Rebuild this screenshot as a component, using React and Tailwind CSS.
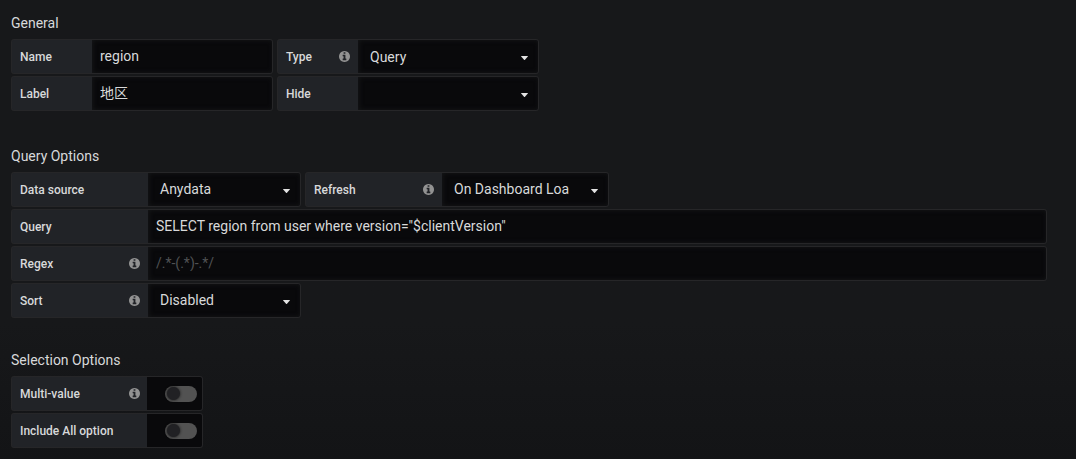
function InfoIcon({ className }) {
  return (
    <svg className={`size-[11px] text-[#929292] ${className}`} viewBox="0 128 1536 1536" fill="currentColor">
      <path d="M1024 1376v-160q0-14-9-23t-23-9h-96v-512q0-14-9-23t-23-9h-320q-14 0-23 9t-9 23v160q0 14 9 23t23 9h96v320h-96q-14 0-23 9t-9 23v160q0 14 9 23t23 9h448q14 0 23-9t9-23zm-128-896v-160q0-14-9-23t-23-9h-192q-14 0-23 9t-9 23v160q0 14 9 23t23 9h192q14 0 23-9t9-23zm640 416q0 209-103 385.500t-279.500 279.500-385.500 103-385.500-103-279.500-279.500-103-385.500 103-385.500 279.500-279.500 385.500-103 385.500 103 279.500 279.500 103 385.500z" />
    </svg>
  );
}

function Label({ children, info, width, iconClass = "mr-[0.5px]" }) {
  return (
    <div className={`flex h-[35px] shrink-0 items-center justify-between rounded-l-[3px] border border-r-0 border-[#262628] bg-[#212327] px-2 text-xs font-medium ${width}`}>
      <span>{children}</span>
      {info && <InfoIcon className={iconClass} />}
    </div>
  );
}

const field =
  "h-[35px] rounded-r-[3px] border border-l-0 border-[#262628] bg-[#09090b] shadow-[inset_1px_0_5px_0_#161719]";

function Input({ value, placeholder, width, pad = "pb-px" }) {
  return (
    <input
      className={`${field} px-2 ${pad} text-sm text-[#d8d9da] outline-none placeholder:text-[#505254] ${width}`}
      defaultValue={value}
      placeholder={placeholder}
      spellCheck={false}
    />
  );
}

function Select({ value, width, pad = "pb-px" }) {
  return (
    <div className={`${field} flex items-center justify-between pr-[10px] pl-3 text-sm ${width}`}>
      <span className={pad}>{value}</span>
      <svg className="mt-[3px] h-1 w-[7px]" viewBox="0 0 7 4" fill="#e3e3e3">
        <path d="M.6 0h5.800q.6 0 .4.600L4 3.700q-.5.400-1 0L.2.600Q0 0 .6 0z" />
      </svg>
    </div>
  );
}

function Toggle() {
  return (
    <div className="flex h-[35px] w-14 items-center justify-end rounded-r-[3px] border border-l-0 border-[#262628] bg-[#09090b] pr-[5px]">
      <button className="flex h-4 w-8 items-center rounded-full bg-[#525252] pl-[1.5px]">
        <span className="size-[13px] rounded-full bg-[#212124] shadow-[0_0_3px_#111]" />
      </button>
    </div>
  );
}

function Row({ children }) {
  return <div className="flex h-[35px] gap-1">{children}</div>;
}

function Section({ title, children }) {
  return (
    <section>
      <h5 className="mb-[6px] h-5 text-sm leading-5">{title}</h5>
      <div className="flex flex-col gap-[2px]">{children}</div>
    </section>
  );
}

export default function App() {
  return (
    <main className="flex h-[459px] w-[1076px] flex-col overflow-hidden bg-linear-to-b from-[#17181a] from-70% to-[#131416] pt-[13px] pr-[29px] pl-[11px] font-['Roboto','Noto_Sans_CJK_SC',sans-serif] text-[#d8d9da]">
      <Section title="General">
        <Row>
          <div className="flex"><Label width="w-[81px]">Name</Label><Input width="w-[181px]" value="region" /></div>
          <div className="flex"><Label width="w-[81px]" info>Type</Label><Select width="w-[181px]" value="Query" pad="pt-px" /></div>
        </Row>
        <Row>
          <div className="flex"><Label width="w-[81px]">Label</Label><Input width="w-[181px]" value="地区" pad="pb-[3px]" /></div>
          <div className="flex"><Label width="w-[81px]">Hide</Label><Select width="w-[181px]" value="" /></div>
        </Row>
      </Section>
      <div className="h-[35px]" />
      <Section title="Query Options">
        <Row>
          <div className="flex"><Label width="w-[137px]">Data source</Label><Select width="w-[153px]" value="Anydata" /></div>
          <div className="flex"><Label width="w-[137px]" info>Refresh</Label><Select width="w-[167px]" value="On Dashboard Loa" /></div>
        </Row>
        <Row>
          <div className="flex grow"><Label width="w-[137px]">Query</Label><Input width="grow" value={'SELECT region from user where version="$clientVersion"'} /></div>
        </Row>
        <Row>
          <div className="flex grow"><Label width="w-[137px]" info>Regex</Label><Input width="grow" placeholder="/.*-(.*)-.*/" /></div>
        </Row>
        <Row>
          <div className="flex"><Label width="w-[137px]" info>Sort</Label><Select width="w-[153px]" value="Disabled" /></div>
        </Row>
      </Section>
      <div className="h-8" />
      <Section title="Selection Options">
        <Row>
          <div className="flex"><Label width="w-[136px]" info iconClass="mr-[-0.5px]">Multi-value</Label><Toggle /></div>
        </Row>
        <Row>
          <div className="flex"><Label width="w-[136px]">Include All option</Label><Toggle /></div>
        </Row>
      </Section>
    </main>
  );
}
